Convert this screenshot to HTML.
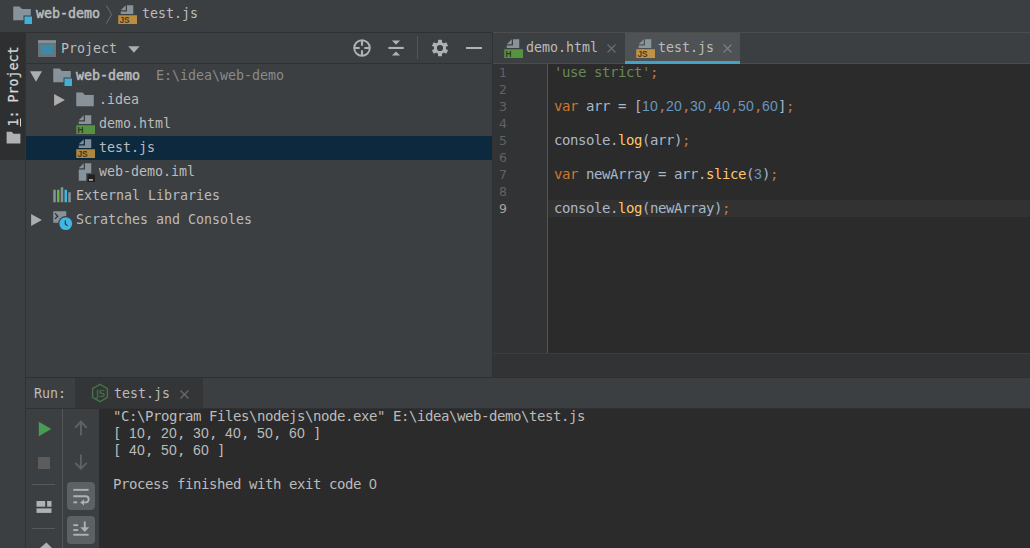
<!DOCTYPE html>
<html><head><meta charset="utf-8"><title>web-demo</title>
<style>
html,body{margin:0;padding:0;}
body{width:1030px;height:548px;overflow:hidden;background:#3c3f41;position:relative;
 font-family:"DejaVu Sans Mono","Liberation Mono",monospace;font-size:13.3px;color:#bbbbbb;}
.abs{position:absolute;}
.t{position:absolute;white-space:pre;line-height:16px;}
.code{font-family:"DejaVu Sans Mono","Liberation Mono",monospace;font-size:14px;letter-spacing:-0.43px;}
.ln{position:absolute;left:500px;font-family:"DejaVu Sans","Liberation Sans",sans-serif;font-size:12.5px;color:#606366;line-height:17px;}
.b{-webkit-text-stroke:0.5px #bbbbbb;}
.d{font-family:"Liberation Sans","DejaVu Sans",sans-serif;font-size:14px;letter-spacing:0.21px}
.kw{color:#cc7832}.st{color:#6a8759}.nu{color:#6897bb}.fn{color:#ffc66d}
svg{position:absolute;overflow:visible}
</style></head><body>

<div class="abs" style="left:0;top:0;width:1030px;height:32px;background:#3c3f41;"></div>
<svg style="left:12px;top:4px" width="20" height="20" viewBox="0 0 16 16"><path fill="#9aa7b0" fill-opacity=".8" d="M1 2h5l2 2h7v5.2H9.2V13H1z"/><rect x="10" y="10" width="6" height="6" fill="#40b6e0" fill-opacity=".95"/></svg>
<div class="t b" style="left:36px;top:6px;">web-demo</div>
<svg style="left:105px;top:5px" width="8" height="20" viewBox="0 0 8 20"><path d="M1.3 0.5 6.6 9.5 1.3 18.5" fill="none" stroke="#6b6d6f" stroke-width="1"/></svg>
<svg style="left:117px;top:4px" width="20" height="20" viewBox="0 0 16 16"><path fill="#9aa7b0" fill-opacity=".8" d="M7 1 3 5h4z"/><path fill="#9aa7b0" fill-opacity=".8" d="M8 1v5H3v2h10V1z"/><rect x="1" y="9" width="15" height="7" fill="#f4af3d" fill-opacity=".7"/><text x="1.9" y="15" font-family="Liberation Sans,DejaVu Sans,sans-serif" font-weight="bold" font-size="6.7" fill="#231f20" fill-opacity=".8">JS</text></svg>
<div class="t" style="left:142px;top:6px;">test.js</div>
<div class="abs" style="left:0;top:32px;width:25px;height:128px;background:#2d2f30;"></div>
<div class="abs" style="left:25px;top:32px;width:1px;height:516px;background:#323232;"></div>
<div class="t" style="left:0;top:0;transform-origin:0 0;transform:translate(6px,126.5px) rotate(-90deg);color:#d6d6d6;-webkit-text-stroke:0.25px #d6d6d6;"><span style="text-decoration:underline;text-underline-offset:1.5px">1</span>: Project</div>
<svg style="left:6px;top:131px" width="15" height="13" viewBox="0 0 15 13"><path d="M0.6 0.8h5.2l1.6 2h7v9.6H0.6z" fill="#afb1b3"/></svg>
<div class="abs" style="left:0;top:32px;width:492px;height:1px;background:#2f3132;"></div>
<div class="abs" style="left:492px;top:32px;width:1px;height:346px;background:#2f3132;"></div>
<svg style="left:38px;top:40px" width="18" height="17" viewBox="0 0 18 17"><rect x="0" y="0.3" width="18" height="16.7" fill="#6c7378"/><rect x="0" y="0.3" width="18" height="2.6" fill="#87939a"/><rect x="2.6" y="4.8" width="12.8" height="9.4" fill="#3a8aa8"/></svg>
<div class="t" style="left:61px;top:41px;">Project</div>
<svg style="left:128px;top:46px" width="12" height="7" viewBox="0 0 12 7"><path d="M0.2 0.2h11.4L5.9 6.8z" fill="#adadad"/></svg>
<svg style="left:352px;top:38px" width="20" height="20" viewBox="0 0 20 20"><g fill="none" stroke="#afb1b3" stroke-width="1.9"><circle cx="10" cy="10" r="7.8"/><path stroke-width="2.1" d="M10 2v5.7M10 12.3v5.7M2 10h5.7M12.3 10h5.7"/></g></svg>
<svg style="left:386px;top:38px" width="20" height="20" viewBox="0 0 20 20"><g fill="#afb1b3"><rect x="2.4" y="8.9" width="15.4" height="2.1"/><path d="M5.9 2.6h8.2L10 6.7z"/><path d="M5.9 17.6h8.2L10 13.5z"/></g></svg>
<div class="abs" style="left:417px;top:36px;width:1px;height:23px;background:#555555;"></div>
<svg style="left:430px;top:38px" width="20" height="20" viewBox="0 0 20 20"><g transform="translate(10 10)" fill="#afb1b3"><rect x="-2" y="-8.2" width="4" height="4.2" rx="0.5" transform="rotate(0)"/><rect x="-2" y="-8.2" width="4" height="4.2" rx="0.5" transform="rotate(60)"/><rect x="-2" y="-8.2" width="4" height="4.2" rx="0.5" transform="rotate(120)"/><rect x="-2" y="-8.2" width="4" height="4.2" rx="0.5" transform="rotate(180)"/><rect x="-2" y="-8.2" width="4" height="4.2" rx="0.5" transform="rotate(240)"/><rect x="-2" y="-8.2" width="4" height="4.2" rx="0.5" transform="rotate(300)"/><path fill-rule="evenodd" d="M0-6.1a6.1 6.1 0 1 0 0 12.2a6.1 6.1 0 1 0 0-12.2zM0-3.1a3.1 3.1 0 1 1 0 6.2a3.1 3.1 0 1 1 0-6.2z"/></g></svg>
<div class="abs" style="left:466px;top:47px;width:16px;height:2px;background:#afb1b3;"></div>
<div class="abs" style="left:26px;top:63px;width:466px;height:1px;background:#2f3132;"></div>
<div class="abs" style="left:26px;top:136px;width:466px;height:24px;background:#0d293e;"></div>
<svg style="left:30px;top:71px" width="12" height="11" viewBox="0 0 12 10.5"><path d="M0 0h12L6 10.5z" fill="#adadad"/></svg>
<svg style="left:52px;top:66px" width="20" height="20" viewBox="0 0 16 16"><path fill="#9aa7b0" fill-opacity=".8" d="M1 2h5l2 2h7v5.2H9.2V13H1z"/><rect x="10" y="10" width="6" height="6" fill="#40b6e0" fill-opacity=".95"/></svg>
<div class="t b" style="left:76px;top:68px;">web-demo</div>
<div class="t" style="left:156px;top:68px;color:#8a8a8a;">E:\idea\web-demo</div>
<svg style="left:54px;top:94px" width="11" height="12" viewBox="0 0 10.8 12"><path d="M0 0v12l10.8-6z" fill="#adadad"/></svg>
<svg style="left:75px;top:90px" width="20" height="20" viewBox="0 0 16 16"><path fill="#9aa7b0" fill-opacity=".8" d="M1 2h5l2 2h7v9H1z"/></svg>
<div class="t" style="left:99px;top:92px;">.idea</div>
<svg style="left:75px;top:114px" width="20" height="20" viewBox="0 0 16 16"><path fill="#9aa7b0" fill-opacity=".8" d="M7 1 3 5h4z"/><path fill="#9aa7b0" fill-opacity=".8" d="M8 1v5H3v2h10V1z"/><rect x="1" y="9" width="15" height="7" fill="#62b543" fill-opacity=".7"/><text x="1.9" y="15" font-family="Liberation Sans,DejaVu Sans,sans-serif" font-weight="bold" font-size="6.7" fill="#231f20" fill-opacity=".8">H</text></svg>
<div class="t" style="left:99px;top:116px;">demo.html</div>
<svg style="left:75px;top:138px" width="20" height="20" viewBox="0 0 16 16"><path fill="#9aa7b0" fill-opacity=".8" d="M7 1 3 5h4z"/><path fill="#9aa7b0" fill-opacity=".8" d="M8 1v5H3v2h10V1z"/><rect x="1" y="9" width="15" height="7" fill="#f4af3d" fill-opacity=".7"/><text x="1.9" y="15" font-family="Liberation Sans,DejaVu Sans,sans-serif" font-weight="bold" font-size="6.7" fill="#231f20" fill-opacity=".8">JS</text></svg>
<div class="t" style="left:99px;top:140px;">test.js</div>
<svg style="left:75px;top:162px" width="20" height="20" viewBox="0 0 16 16"><path fill="#9aa7b0" fill-opacity=".8" d="M7 1 3 5h4z"/><path fill="#9aa7b0" fill-opacity=".8" d="M8 1v5H3v9h6V9h4V1z"/><rect x="10" y="10" width="6" height="6" fill="#231f20"/><rect x="11.2" y="13.8" width="3.1" height="1.1" fill="#cfcfcf"/></svg>
<div class="t" style="left:99px;top:164px;">web-demo.iml</div>
<svg style="left:52px;top:186px" width="20" height="20" viewBox="0 0 16 16"><rect x="1" y="3" width="2" height="10" fill="#9aa7b0" fill-opacity=".8"/><rect x="4" y="3" width="2" height="10" fill="#62b543"/><rect x="7" y="1" width="2" height="12" fill="#9aa7b0" fill-opacity=".8"/><rect x="10" y="3" width="2" height="10" fill="#40b6e0"/><rect x="13" y="5" width="2" height="8" fill="#9aa7b0" fill-opacity=".8"/></svg>
<div class="t" style="left:76px;top:188px;">External Libraries</div>
<svg style="left:31px;top:214px" width="11" height="12" viewBox="0 0 10.8 12"><path d="M0 0v12l10.8-6z" fill="#adadad"/></svg>
<svg style="left:52px;top:210px" width="20" height="20" viewBox="0 0 16 16"><defs><mask id="scm"><rect x="0" y="0" width="16" height="16" fill="#fff"/><circle cx="11" cy="10.9" r="6" fill="#000"/></mask></defs><rect x="1" y="1" width="10.4" height="9.2" fill="#9aa7b0" fill-opacity=".8" mask="url(#scm)"/><path d="M2.4 2.7 4.6 4.9 2.4 7.1" fill="none" stroke="#2b2d2f" stroke-width="1"/><circle cx="11" cy="10.9" r="5.1" fill="#40b6e0"/><path d="M10.7 8.3v2.9l1.8 1.5" fill="none" stroke="#2b3a42" stroke-width="1"/></svg>
<div class="t" style="left:76px;top:212px;">Scratches and Consoles</div>
<div class="abs" style="left:493px;top:32px;width:537px;height:32px;background:#3c3f41;"></div>
<div class="abs" style="left:493px;top:32px;width:537px;height:1px;background:#4d4d4d;"></div>
<div class="abs" style="left:493px;top:63px;width:537px;height:1px;background:#4b4b4b;"></div>
<div class="abs" style="left:625px;top:33px;width:115px;height:28px;background:#4e5254;"></div>
<div class="abs" style="left:625px;top:61px;width:115px;height:3px;background:#44a2c4;"></div>
<svg style="left:503px;top:38px" width="20" height="20" viewBox="0 0 16 16"><path fill="#9aa7b0" fill-opacity=".8" d="M7 1 3 5h4z"/><path fill="#9aa7b0" fill-opacity=".8" d="M8 1v5H3v2h10V1z"/><rect x="1" y="9" width="15" height="7" fill="#62b543" fill-opacity=".7"/><text x="1.9" y="15" font-family="Liberation Sans,DejaVu Sans,sans-serif" font-weight="bold" font-size="6.7" fill="#231f20" fill-opacity=".8">H</text></svg>
<div class="t" style="left:526px;top:40px;">demo.html</div>
<svg style="left:606.5px;top:43.5px" width="9" height="9" viewBox="0 0 9 9"><path d="M0.5 0.5 8.5 8.5M8.5 0.5 0.5 8.5" fill="none" stroke="#6e6e6e" stroke-width="1.1"/></svg>
<svg style="left:635px;top:38px" width="20" height="20" viewBox="0 0 16 16"><path fill="#9aa7b0" fill-opacity=".8" d="M7 1 3 5h4z"/><path fill="#9aa7b0" fill-opacity=".8" d="M8 1v5H3v2h10V1z"/><rect x="1" y="9" width="15" height="7" fill="#f4af3d" fill-opacity=".7"/><text x="1.9" y="15" font-family="Liberation Sans,DejaVu Sans,sans-serif" font-weight="bold" font-size="6.7" fill="#231f20" fill-opacity=".8">JS</text></svg>
<div class="t" style="left:658px;top:40px;">test.js</div>
<svg style="left:722.7px;top:43.5px" width="9" height="9" viewBox="0 0 9 9"><path d="M0.5 0.5 8.5 8.5M8.5 0.5 0.5 8.5" fill="none" stroke="#7d8082" stroke-width="1.1"/></svg>
<div class="abs" style="left:493px;top:64px;width:537px;height:289px;background:#2b2b2b;overflow:hidden;">
<div class="abs" style="left:0;top:0;width:54px;height:289px;background:#313335;"></div>
<div class="abs" style="left:54px;top:0;width:1px;height:289px;background:#555555;"></div>
<div class="abs" style="left:55px;top:136px;width:482px;height:17px;background:#323232;"></div>
<div class="ln" style="left:6px;top:0px">1</div>
<div class="ln" style="left:6px;top:17px">2</div>
<div class="ln" style="left:6px;top:34px">3</div>
<div class="ln" style="left:6px;top:51px">4</div>
<div class="ln" style="left:6px;top:68px">5</div>
<div class="ln" style="left:6px;top:85px">6</div>
<div class="ln" style="left:6px;top:102px">7</div>
<div class="ln" style="left:6px;top:119px">8</div>
<div class="ln" style="left:6px;top:136px;color:#a4a3a3">9</div>
<div class="t code" style="left:61px;top:0px;color:#a9b7c6;line-height:17px;"><span class="st">'use strict'</span><span class="kw">;</span>

<span class="kw">var </span>arr = [<span class="nu d">10</span><span class="kw">,</span><span class="nu d">20</span><span class="kw">,</span><span class="nu d">30</span><span class="kw">,</span><span class="nu d">40</span><span class="kw">,</span><span class="nu d">50</span><span class="kw">,</span><span class="nu d">60</span>]<span class="kw">;</span>

console.<span class="fn">log</span>(arr)<span class="kw">;</span>

<span class="kw">var </span>newArray = arr.<span class="fn">slice</span>(<span class="nu d">3</span>)<span class="kw">;</span>

console.<span class="fn">log</span>(newArray)<span class="kw">;</span></div>
</div>
<div class="abs" style="left:493px;top:353px;width:537px;height:1px;background:#3d3d3d;"></div>
<div class="abs" style="left:493px;top:354px;width:537px;height:23px;background:#313335;"></div>
<div class="abs" style="left:26px;top:377px;width:1004px;height:1px;background:#2d2f30;"></div>
<div class="abs" style="left:75px;top:378px;width:128px;height:30px;background:#333537;"></div>
<div class="t" style="left:34px;top:386px;">Run:</div>
<svg style="left:91px;top:383px" width="18" height="20" viewBox="0 0 18 20"><path d="M9 1.4 16.4 5.7V14.3L9 18.6 1.6 14.3V5.7z" fill="none" stroke="#44724a" stroke-width="1.5"/><text x="4.9" y="13.6" font-family="DejaVu Sans,Liberation Sans,sans-serif" font-size="9.4" fill="#44724a" stroke="#44724a" stroke-width="0.3" textLength="9.2" lengthAdjust="spacingAndGlyphs">JS</text></svg>
<div class="t" style="left:114px;top:386px;">test.js</div>
<svg style="left:179.5px;top:389.5px" width="9" height="9" viewBox="0 0 9 9"><path d="M0.5 0.5 8.5 8.5M8.5 0.5 0.5 8.5" fill="none" stroke="#6e6e6e" stroke-width="1.1"/></svg>
<div class="abs" style="left:26px;top:408px;width:1004px;height:1px;background:#2f3132;"></div>
<div class="abs" style="left:62px;top:409px;width:1px;height:139px;background:#555555;"></div>
<div class="abs" style="left:99px;top:409px;width:931px;height:139px;background:#2b2b2b;overflow:hidden;">
<div class="t code" style="left:14px;top:-1px;color:#bbbbbb;line-height:17px;">"C:\Program Files\nodejs\node.exe" E:\idea\web-demo\test.js
[ <span class="d">10</span>, <span class="d">20</span>, <span class="d">30</span>, <span class="d">40</span>, <span class="d">50</span>, <span class="d">60</span> ]
[ <span class="d">40</span>, <span class="d">50</span>, <span class="d">60</span> ]

Process finished with exit code <span class="d">0</span></div>
</div>
<svg style="left:38px;top:421px" width="14" height="16" viewBox="0 0 14 16"><path d="M0.8 0.8V15.2L13.3 8z" fill="#499c54"/></svg>
<div class="abs" style="left:38px;top:457px;width:12px;height:12px;background:#5c5c5c;"></div>
<div class="abs" style="left:32px;top:484px;width:23px;height:1px;background:#595959;"></div>
<svg style="left:36px;top:500px" width="16" height="13" viewBox="0 0 16 13"><g fill="#afb1b3"><rect x="0.5" y="1" width="8.7" height="5.7"/><rect x="11.1" y="1" width="4.4" height="5.7"/><rect x="0.5" y="8.4" width="15" height="4.5"/></g></svg>
<div class="abs" style="left:32px;top:528px;width:23px;height:1px;background:#595959;"></div>
<svg style="left:36px;top:541px" width="20" height="8" viewBox="0 0 20 8"><path d="M10.4 1.5 17 8H2.8z" fill="#afb1b3"/></svg>
<svg style="left:73px;top:419px" width="16" height="18" viewBox="0 0 16 18"><path d="M7.9 16.5V2.5M2.2 8.8 7.9 2.5 13.7 8.8" fill="none" stroke="#5f6163" stroke-width="1.9"/></svg>
<svg style="left:73px;top:453px" width="16" height="18" viewBox="0 0 16 18"><path d="M7.9 1.6V15.6M2.2 9.9 7.9 15.7 13.7 9.9" fill="none" stroke="#5f6163" stroke-width="1.9"/></svg>
<div class="abs" style="left:67px;top:482px;width:28px;height:28px;border-radius:4px;background:#5c6164;"></div>
<svg style="left:67px;top:482px" width="28" height="28" viewBox="0 0 28 28"><g fill="#afb1b3"><rect x="6.3" y="6.9" width="15.3" height="1.9"/><rect x="6.3" y="19.4" width="3.8" height="1.9"/><path d="M13.2 20.4 17 17.2v6.4z"/></g><path d="M6.3 14.2H18.6a3.1 3.1 0 0 1 0 6.2H16.5" fill="none" stroke="#afb1b3" stroke-width="1.9"/></svg>
<div class="abs" style="left:67px;top:516px;width:28px;height:28px;border-radius:4px;background:#5c6164;"></div>
<svg style="left:67px;top:516px" width="28" height="28" viewBox="0 0 28 28"><g fill="#afb1b3"><rect x="6.3" y="8.2" width="4.8" height="1.9"/><rect x="6.3" y="13.1" width="4.8" height="1.9"/><rect x="6.3" y="17.8" width="15.3" height="1.9"/><rect x="16.8" y="5.4" width="1.9" height="7"/><path d="M13.3 11.2h8.9L17.75 16z"/></g></svg>
</body></html>
